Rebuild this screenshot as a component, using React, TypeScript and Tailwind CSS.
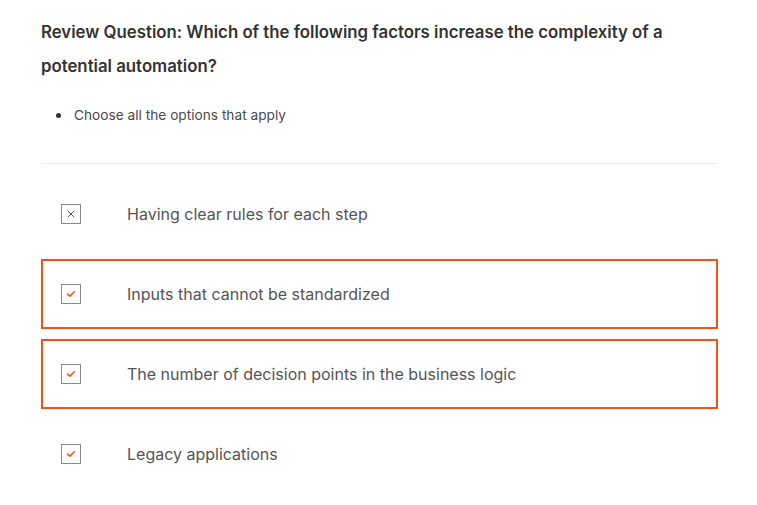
import React from "react";

type Option = { id: number; label: string; checked: boolean; highlighted: boolean };

const options: Option[] = [
    { id: 1, label: "Having clear rules for each step", checked: false, highlighted: false },
    { id: 2, label: "Inputs that cannot be standardized", checked: true, highlighted: true },
    { id: 3, label: "The number of decision points in the business logic", checked: true, highlighted: true },
    { id: 4, label: "Legacy applications", checked: true, highlighted: false },
];

function Box({ checked }: { checked: boolean }) {
    return (
        <div className="flex h-5 w-5 shrink-0 items-center justify-center border border-[#8a8a8a] bg-white">
            {checked ? (
                <svg width="10" height="10" viewBox="0 0 10 10">
                    <path d="M1.5 5.2 L3.8 7.2 L8.3 2.8" fill="none" stroke="#f4511e" strokeWidth="1.6" strokeLinecap="round" strokeLinejoin="round" />
                </svg>
            ) : (
                <svg width="10" height="10" viewBox="0 0 10 10">
                    <path d="M2 2 L8 8 M8 2 L2 8" fill="none" stroke="#555" strokeWidth="1" strokeLinecap="round" />
                </svg>
            )}
        </div>
    );
}

export default function App() {
    return (
        <div className="min-h-[505px] bg-white pl-[41px] pr-[39px] pt-[15px] font-['Inter',sans-serif]">
            <h2 className="text-[16.8px] font-semibold leading-[34px] text-[#333]">
                Review Question: Which of the following factors increase the complexity of a potential automation?
            </h2>

            <ul className="mt-[22px] pl-[15px] text-[13.7px] leading-5 text-[#4a4a4a]">
                <li className="flex items-center">
                    <span className="h-[5px] w-[5px] rounded-full bg-[#333]" />
                    <span className="ml-[13px]">Choose all the options that apply</span>
                </li>
            </ul>

            <div className="mt-[38px] border-t border-[#ebebeb]" />

            <div className="mt-[15px] flex flex-col gap-[10px]">
                {options.map((o) => (
                    <div
                        key={o.id}
                        className={[
                            "flex h-[70px] items-center border-2 pl-[18px]",
                            o.highlighted ? "border-[#f4511e]" : "border-transparent",
                        ].join(" ")}
                    >
                        <Box checked={o.checked} />
                        <span className="ml-[46px] text-[16px] text-[#555]">{o.label}</span>
                    </div>
                ))}
            </div>
        </div>
    );
}
